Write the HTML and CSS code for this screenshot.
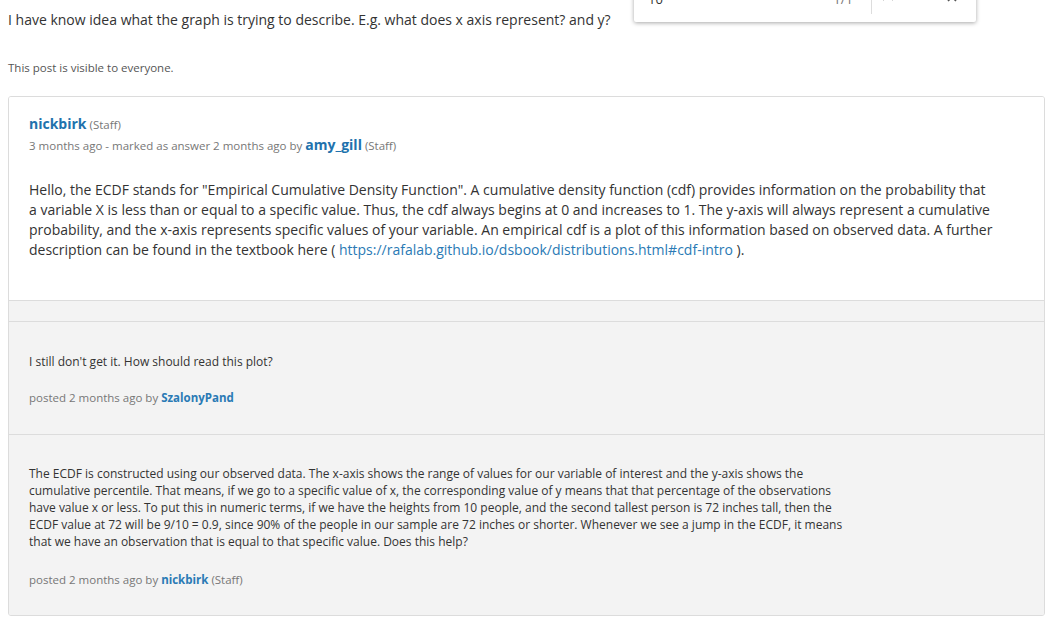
FILE: index.html
```html
<!DOCTYPE html>
<html>
<head>
<meta charset="utf-8">
<link rel="stylesheet" href="styles.css">
</head>
<body>
<div class="question">I have know idea what the graph is trying to describe. E.g. what does x axis represent? and y?</div>
<div class="visibility">This post is visible to everyone.</div>

<div class="card">
  <div class="answer">
    <div class="author"><a class="name">nickbirk</a> <span class="role">(Staff)</span></div>
    <div class="meta">3 months ago - marked as answer 2 months ago by <a class="name">amy_gill</a> <span class="role">(Staff)</span></div>
    <p class="body">Hello, the ECDF stands for "Empirical Cumulative Density Function". A cumulative density function (cdf) provides information on the probability that a variable X is less than or equal to a specific value. Thus, the cdf always begins at 0 and increases to 1. The y-axis will always represent a cumulative probability, and the x-axis represents specific values of your variable. An empirical cdf is a plot of this information based on observed data. A further description can be found in the textbook here ( <a class="link">https://rafalab.github.io/dsbook/distributions.html#cdf-intro</a> ).</p>
  </div>
  <div class="strip"></div>
  <div class="comment">
    <p class="ctext">I still don't get it. How should read this plot?</p>
    <div class="posted">posted 2 months ago by <a class="cname">SzalonyPand</a></div>
  </div>
  <div class="comment last">
    <p class="ctext">The ECDF is constructed using our observed data. The x-axis shows the range of values for our variable of interest and the y-axis shows the cumulative percentile. That means, if we go to a specific value of x, the corresponding value of y means that that percentage of the observations have value x or less. To put this in numeric terms, if we have the heights from 10 people, and the second tallest person is 72 inches tall, then the ECDF value at 72 will be 9/10 = 0.9, since 90% of the people in our sample are 72 inches or shorter. Whenever we see a jump in the ECDF, it means that we have an observation that is equal to that specific value. Does this help?</p>
    <div class="posted">posted 2 months ago by <a class="cname">nickbirk</a> <span class="crole">(Staff)</span></div>
  </div>
</div>

<div class="findbar">
  <span class="findtext">10</span>
  <span class="findcount">1/1</span>
  <span class="finddiv"></span>
  <span class="findbtn">
    <svg width="12" height="8" viewBox="0 0 12 8"><path d="M1 7 L6 2 L11 7" fill="none" stroke="#666" stroke-width="1.5"/></svg>
  </span>
  <span class="findbtn">
    <svg width="12" height="8" viewBox="0 0 12 8"><path d="M1 1 L6 6 L11 1" fill="none" stroke="#666" stroke-width="1.5"/></svg>
  </span>
  <span class="findbtn close">
    <svg width="10" height="10" viewBox="0 0 10 10"><path d="M1 1 L9 9 M9 1 L1 9" fill="none" stroke="#555" stroke-width="1.6"/></svg>
  </span>
</div>
</body>
</html>
```

FILE: styles.css
```css
html, body {
  margin: 0;
  padding: 0;
  background: #fff;
}
body {
  font-family: "Open Sans", "Liberation Sans", sans-serif;
  color: #333;
  padding: 10px 8px 0 8px;
  position: relative;
  overflow: hidden;
  height: 616px;
}
.question {
  font-size: 14px;
  line-height: 20px;
  color: #333;
}
.visibility {
  margin-top: 30px;
  font-size: 11.5px;
  line-height: 16px;
  color: #555;
}
.card {
  margin-top: 20px;
  width: 1035px;
  border: 1px solid #dcdcdc;
  border-radius: 3px;
  overflow: hidden;
}
.answer {
  background: #fff;
  padding: 17px 20px 40px 20px;
}
.author {
  line-height: 20px;
  font-size: 11.5px;
  color: #777;
}
.name {
  font-size: 14px;
  font-weight: 700;
  color: #2172ad;
}
.role {
  font-size: 11.5px;
  color: #777;
}
.meta {
  font-size: 11.5px;
  line-height: 20px;
  color: #777;
}
.body {
  margin: 24px 0 0 0;
  font-size: 14px;
  line-height: 20px;
  color: #333;
  max-width: 966px;
}
.link {
  color: #2a7ab5;
}
.strip {
  height: 20px;
  background: #f3f3f3;
  border-top: 1px solid #dcdcdc;
  border-bottom: 1px solid #dcdcdc;
}
.comment {
  background: #f3f3f3;
  padding: 31px 20px 28px 20px;
  border-bottom: 1px solid #dcdcdc;
}
.comment.last {
  border-bottom: none;
  padding-top: 30px;
  padding-bottom: 27px;
}
.ctext {
  margin: 0;
  font-size: 12px;
  line-height: 17px;
  color: #333;
  max-width: 816px;
}
.posted {
  margin-top: 19px;
  font-size: 11.5px;
  line-height: 17px;
  color: #777;
}
.comment.last .posted {
  margin-top: 21px;
}
.cname {
  font-weight: 700;
  color: #2a7ab5;
}
.crole {
  color: #777;
}
.findbar {
  position: absolute;
  left: 634px;
  top: -20px;
  width: 342px;
  height: 42px;
  background: #fff;
  box-shadow: 0 1px 4px rgba(0,0,0,0.35);
  border-radius: 0 0 2px 2px;
  display: flex;
  align-items: center;
  font-size: 13px;
  color: #333;
}
.findtext {
  margin-left: 14px;
  flex: 1;
  position: relative;
  top: -2px;
}
.findcount {
  color: #777;
  margin-right: 18px;
  position: relative;
  top: -2px;
}
.finddiv {
  align-self: flex-start;
  width: 1px;
  height: 34px;
  background: #ddd;
}
.findbtn {
  width: 32px;
  display: flex;
  justify-content: center;
  position: relative;
  top: -4px;
}
.close {
  margin-right: 8px;
}
```
